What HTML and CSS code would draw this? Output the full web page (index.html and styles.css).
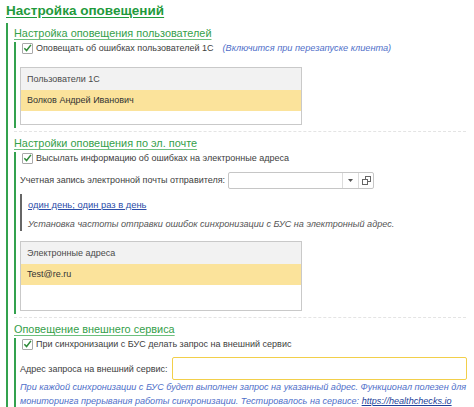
FILE: index.html
```html
<!DOCTYPE html>
<html lang="ru">
<head>
<meta charset="utf-8">
<link rel="stylesheet" href="styles.css">
</head>
<body>
<div class="page">
  <div class="title">Настройка оповещений</div>
  <div class="group">
    <div class="section">
      <div class="sec-title">Настройка оповещения пользователей</div>
      <div class="sec-body">
        <div class="check-row">
          <span class="cb"><svg width="10" height="10" viewBox="0 0 10 10"><path d="M1.5 5.2 L4 7.8 L8.8 1.5" fill="none" stroke="#2f8a3a" stroke-width="1.7"/></svg></span>
          <span class="label">Оповещать об ошибках пользователей 1С</span>
          <span class="hint">(Включится при перезапуске клиента)</span>
        </div>
        <div class="table t1">
          <div class="thead">Пользователи 1С</div>
          <div class="trow">Волков Андрей Иванович</div>
        </div>
      </div>
    </div>
    <div class="sep"></div>
    <div class="section">
      <div class="sec-title">Настройки оповещения по эл. почте</div>
      <div class="sec-body">
        <div class="check-row">
          <span class="cb"><svg width="10" height="10" viewBox="0 0 10 10"><path d="M1.5 5.2 L4 7.8 L8.8 1.5" fill="none" stroke="#2f8a3a" stroke-width="1.7"/></svg></span>
          <span class="label">Высылать информацию об ошибках на электронные адреса</span>
        </div>
        <div class="field-row">
          <span class="label">Учетная запись электронной почты отправителя:</span>
          <div class="combo">
            <span class="combo-input"></span>
            <span class="combo-btn"><svg width="5" height="3" viewBox="0 0 5 3"><path d="M0 0 H5 L2.5 3 Z" fill="#555"/></svg></span>
            <span class="combo-btn"><svg width="9" height="9" viewBox="0 0 9 9"><rect x="3.5" y="0.5" width="5" height="5" fill="#fff" stroke="#666"/><rect x="0.5" y="3.5" width="5" height="5" fill="#fff" stroke="#666"/></svg></span>
          </div>
        </div>
        <div class="freq">
          <a class="link">один день; один раз в день</a>
          <div class="note">Установка частоты отправки ошибок синхронизации с БУС на электронный адрес.</div>
        </div>
        <div class="table t2">
          <div class="thead">Электронные адреса</div>
          <div class="trow">Test@re.ru</div>
        </div>
      </div>
    </div>
    <div class="sep"></div>
    <div class="section">
      <div class="sec-title">Оповещение внешнего сервиса</div>
      <div class="sec-body">
        <div class="check-row">
          <span class="cb"><svg width="10" height="10" viewBox="0 0 10 10"><path d="M1.5 5.2 L4 7.8 L8.8 1.5" fill="none" stroke="#2f8a3a" stroke-width="1.7"/></svg></span>
          <span class="label">При синхронизации с БУС делать запрос на внешний сервис</span>
        </div>
        <div class="field-row f3">
          <span class="label">Адрес запроса на внешний сервис:</span>
          <span class="text-input"></span>
        </div>
        <div class="hint block">При каждой синхронизации с БУС будет выполнен запрос на указанный адрес. Функционал полезен для<br>мониторинга прерывания работы синхронизации. Тестировалось на сервисе: <a class="link2">https://healthchecks.io</a></div>
      </div>
    </div>
  </div>
</div>
</body>
</html>
```
FILE: styles.css
```css
* { box-sizing: border-box; }
html, body { margin: 0; padding: 0; background: #fff; }
body {
  font-family: "Liberation Sans", Arial, sans-serif;
  font-size: 9px;
  color: #404040;
  width: 474px;
  height: 407px;
  overflow: hidden;
}
.page { padding: 2px 0 0 6px; }
.title {
  font-size: 13.5px;
  font-weight: bold;
  color: #1f9a3c;
  text-decoration: underline;
  text-underline-offset: 2px;
  line-height: 18px;
}
.group {
  margin-top: 3px;
  border-left: 2px solid #33a24e;
  padding-left: 6px;
  height: 400px;
}
.section { padding-top: 2px; }
.sec-title {
  font-size: 10.9px;
  color: #35a04a;
  text-decoration: underline;
  text-decoration-color: #6dbf7e;
  text-underline-offset: 2px;
  line-height: 16px;
}
.sec-body {
  border-left: 2px solid #33a24e;
  padding-left: 4px;
  padding-bottom: 3px;
  margin-top: 1px;
}
.check-row {
  display: flex;
  align-items: center;
  height: 12px;
  gap: 3px;
}
.cb {
  width: 11px; height: 11px;
  border: 1px solid #a8a8a8;
  border-radius: 1px;
  display: flex; align-items: center; justify-content: center;
  background: #fff;
  margin-left: 2px;
  flex: none;
}
.label { color: #404040; white-space: nowrap; }
.hint {
  font-size: 9.2px;
  font-style: italic;
  color: #4f6fc9;
  margin-left: 6px;
  white-space: nowrap;
}
.hint.block {
  font-size: 9.1px;
  margin: 0;
  line-height: 14px;
}
.link2 { color: #1d3f99; text-decoration: underline; }
.table {
  margin-top: 13px;
  width: 282px;
  border: 1px solid #c9c9c9;
  background: #fff;
}
.t1 { height: 58px; }
.t2 { height: 70px; margin-top: 10px; }
.thead {
  background: #f2f2f2;
  height: 22px;
  line-height: 22px;
  padding-left: 6px;
  color: #4a4a4a;
}
.trow {
  background: #fbe39b;
  height: 21px;
  line-height: 21px;
  padding-left: 6px;
  color: #333;
}
.field-row {
  display: flex;
  align-items: center;
  margin-top: 7px;
  height: 18px;
}
.field-row .label { margin-right: 3px; }
.combo {
  display: flex;
  height: 17px;
  border: 1px solid #c6c6c6;
  border-radius: 2px;
}
.combo-input { width: 114px; border-right: 1px solid #dcdcdc; }
.combo-btn {
  width: 15px;
  display: flex; align-items: center; justify-content: center;
}
.combo-btn + .combo-btn { border-left: 1px solid #dcdcdc; }
.freq {
  margin-top: 5px;
  border-left: 2px solid #666;
  padding-left: 6px;
  padding-top: 4px;
  padding-bottom: 1px;
}
.link {
  font-size: 9.4px;
  color: #2c4ea8;
  text-decoration: underline;
  display: block;
  line-height: 13px;
}
.note {
  font-size: 9.1px;
  font-style: italic;
  color: #555;
  margin-top: 7px;
  line-height: 12px;
}
.sep { height: 4px; border-bottom: 1px dashed #e4e4e4; margin-right: 8px; }
.sep + .section { padding-top: 3px; }
.f3 { margin-top: 7px; height: 23px; }
.f3 .label { margin-right: 4px; }
.text-input {
  flex: 1;
  height: 23px;
  border: 1.5px solid #f2cf4a;
  border-radius: 2px;
  margin-right: 7px;
}
```
